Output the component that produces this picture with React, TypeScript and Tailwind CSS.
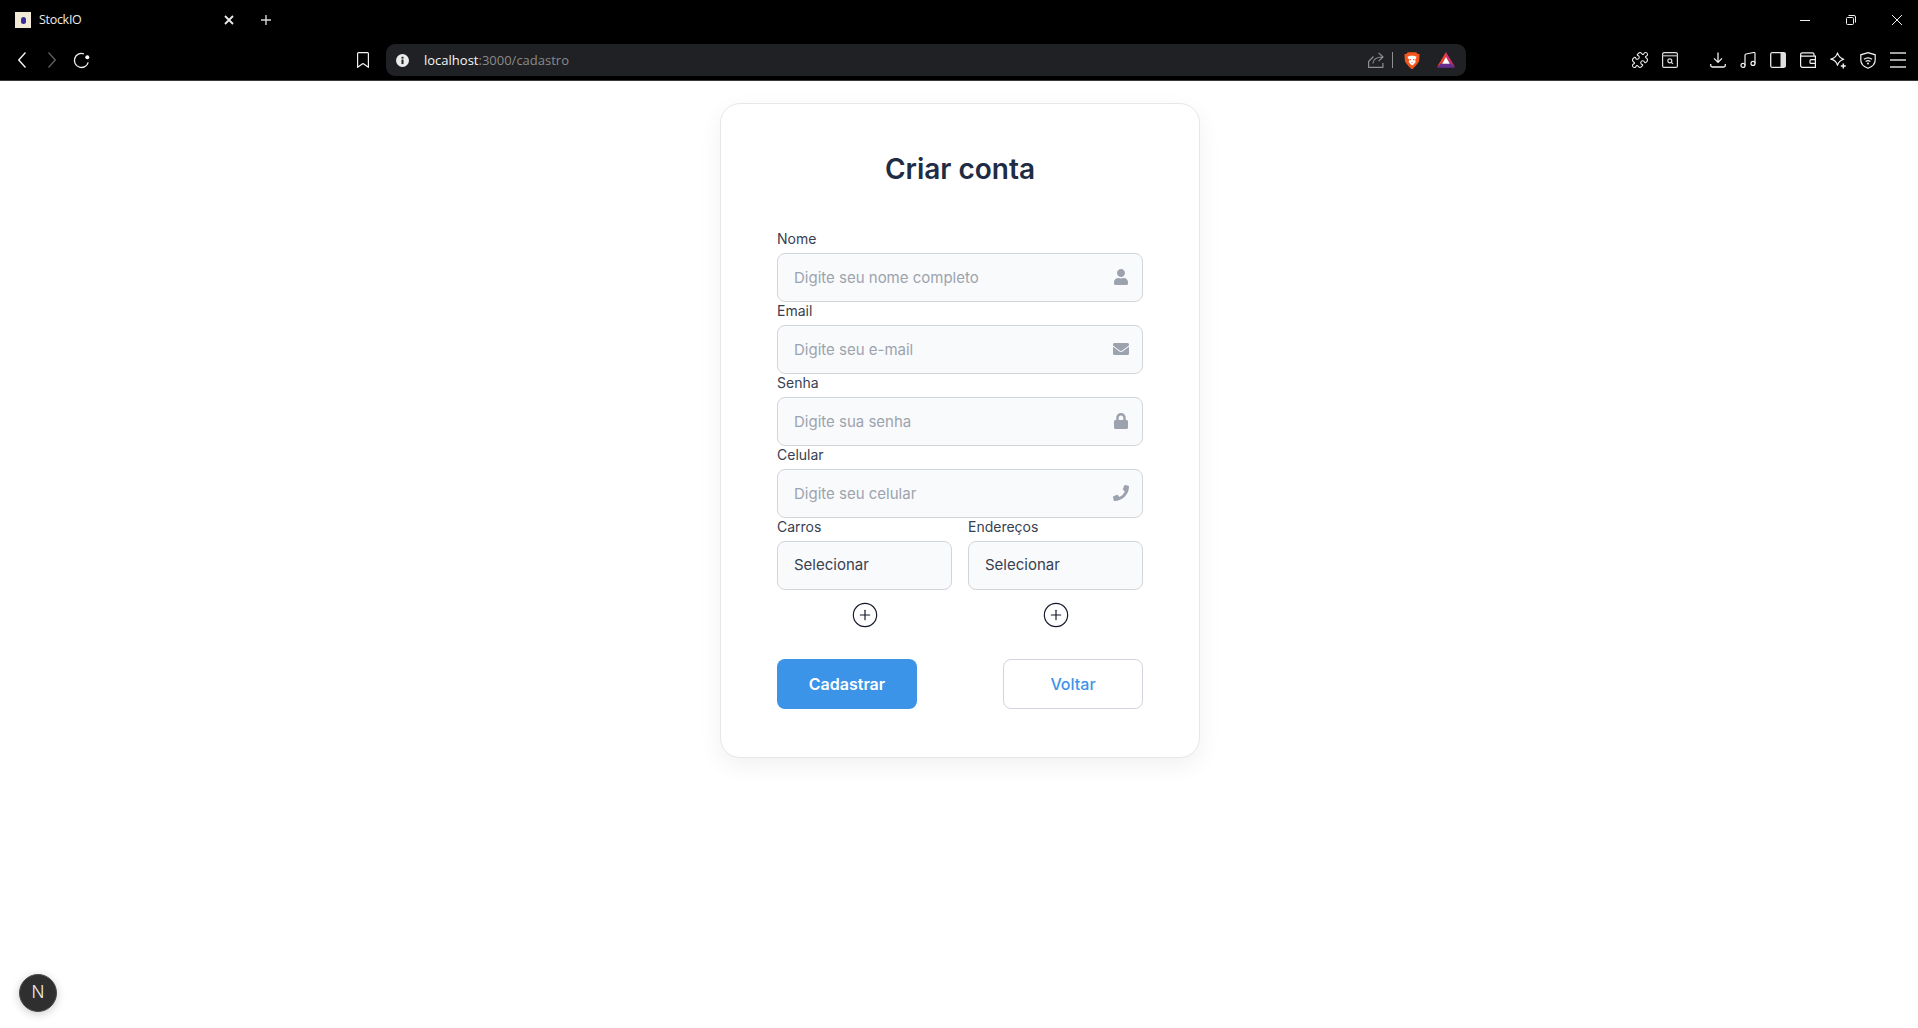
import { CirclePlus, Puzzle } from 'lucide-react';
import { FaUser, FaEnvelope, FaLock, FaPhoneAlt } from 'react-icons/fa';
import type { ReactNode } from 'react';

function BackIcon({ color }: { color: string }) {
  return (
    <svg width="8" height="16" viewBox="0 0 8 16" fill="none" stroke={color} strokeWidth="1.4">
      <path d="M7.500 0.500L0.800 8l6.700 7.500" />
    </svg>
  );
}

function ForwardIcon({ color }: { color: string }) {
  return (
    <svg width="8" height="16" viewBox="0 0 8 16" fill="none" stroke={color} strokeWidth="1.4">
      <path d="M0.500 0.500L7.200 8l-6.700 7.500" />
    </svg>
  );
}

function ReloadIcon() {
  return (
    <svg width="17" height="17" viewBox="0 0 17 17" fill="none" stroke="#f2f2f2" strokeWidth="1.300">
      <path d="M15.200 10.300A7 7 0 1 1 10.800 1.900" />
      <circle cx="14.300" cy="5.300" r="2" fill="#ffffff" stroke="none" />
    </svg>
  );
}

function BookmarkIcon() {
  return (
    <svg width="12" height="16" viewBox="0 0 12 16" fill="none" stroke="#f2f2f2" strokeWidth="1.200" strokeLinejoin="round">
      <path d="M1.500 0.600h9a0.900 0.900 0 0 1 0.900 0.900v13.800L6 11.600 0.600 15.300V1.500a0.900 0.900 0 0 1 0.900-0.900z" />
    </svg>
  );
}

function InfoIcon() {
  return (
    <svg width="13" height="13" viewBox="0 0 13 13">
      <circle cx="6.500" cy="6.500" r="6.500" fill="#ececec" />
      <rect x="5.500" y="5.500" width="2" height="4.600" fill="#202124" />
      <rect x="5.500" y="2.800" width="2" height="1.800" fill="#202124" />
    </svg>
  );
}

function ShareIcon() {
  return (
    <svg width="16" height="16" viewBox="0 0 16 16" fill="none" stroke="#8f8f8f" strokeWidth="1.200" strokeLinejoin="round">
      <path d="M5.500 4.500L0.600 9.500v5.900h14.300V11" />
      <path d="M4.800 11.500c0.400-4 3.300-6.500 10-6.500M10.600 0.900l4.400 4.100-4.400 4.100" />
    </svg>
  );
}

function BraveIcon() {
  return (
    <svg width="16" height="17" viewBox="0 0 16 17">
      <path d="M3.800 0.300h8.400l1.500 1.600 1.800 0.100-0.300 6.300c-0.100 2.400-4.800 7-6.200 8.400-0.300 0.300-1.700 0.300-2 0C5.600 15.300 0.900 10.700 0.800 8.300L0.500 2l1.800-0.100z" fill="#f1561d" />
      <path d="M3.400 4.700l2.900-0.900h3.400l2.900 0.900-1.500 3.500 0.700 1.700-2.300 2.600-1.300 1-1.300-1-2.300-2.600 0.700-1.700z" fill="#fff" />
      <path d="M5.300 6.800l1.700 0.400v1H5.800zM10.700 6.800L9 7.200v1h1.200zM7 10h2l-1 1z" fill="#f1561d" />
    </svg>
  );
}

function RewardsIcon() {
  return (
    <svg width="18" height="16" viewBox="0 0 18 16">
      <path d="M9 0L0 15l4.500-2.800L9 5.500z" fill="#f2402c" />
      <path d="M9 0l9 15-4.500-2.800L9 5.500z" fill="#d0306a" />
      <path d="M0 15.800h18L14.200 11.600H3.800z" fill="#662d91" />
      <path d="M9 5l3.900 6.800H5.100z" fill="#fff" />
    </svg>
  );
}

function SearchPanelIcon() {
  return (
    <svg width="16" height="16" viewBox="0 0 16 16" fill="none" stroke="#dedede" strokeWidth="1.200">
      <rect x="0.600" y="0.600" width="14.800" height="14.800" rx="1.500" />
      <path d="M0.600 3.700h14.800" strokeWidth="1.600" stroke="#9a9a9a" />
      <circle cx="7.800" cy="8.800" r="2" />
      <path d="M9.300 10.300l1.600 1.600" />
    </svg>
  );
}

function DownloadIcon() {
  return (
    <svg width="16" height="16" viewBox="0 0 16 16" fill="none" stroke="#f2f2f2" strokeWidth="1.300" strokeLinejoin="round">
      <path d="M8 0.500v9.500M4 6.400l4 4 4-4" />
      <path d="M0.700 12v1.300c0 1 0.700 1.700 1.600 1.700h11.400c0.900 0 1.600-0.700 1.600-1.700V12" />
    </svg>
  );
}

function MusicIcon() {
  return (
    <svg width="17" height="16" viewBox="0 0 17 16" fill="none" stroke="#f2f2f2" strokeWidth="1.200">
      <circle cx="3" cy="13.400" r="2" />
      <circle cx="13" cy="11.400" r="2" />
      <path d="M5 13.400V3.300c0-0.700 0.400-1.100 1-1.300l8-1.500c0.600-0.100 1 0.200 1 0.800v10.100" />
    </svg>
  );
}

function SidebarIcon() {
  return (
    <svg width="16" height="16" viewBox="0 0 16 16">
      <rect x="0.700" y="0.700" width="14.600" height="14.600" rx="1.500" fill="none" stroke="#e8e8e8" strokeWidth="1.300" />
      <rect x="10.500" y="1" width="5" height="14" fill="#e0e0e0" />
    </svg>
  );
}

function WalletIcon() {
  return (
    <svg width="16" height="16" viewBox="0 0 16 16" fill="none" stroke="#f2f2f2" strokeWidth="1.200">
      <path d="M0.600 3.500v10a1.800 1.800 0 0 0 1.800 1.800h13V4.200H2.300a1.700 1.700 0 0 1-1.700-1.700c0-1 0.800-1.700 1.700-1.700h10.200a1.500 1.500 0 0 1 1.500 1.500v1.900" />
      <rect x="10" y="7.700" width="5.400" height="3.700" rx="1" fill="#000" />
    </svg>
  );
}

function SparkleIcon() {
  return (
    <svg width="17" height="17" viewBox="0 0 17 17" fill="none" stroke="#f2f2f2" strokeWidth="1.200" strokeLinejoin="round">
      <path d="M7.500 0.800c0.900 3.400 2.600 5.300 6.200 6.400-1.700 0.600-3 1.300-3.900 2.200-1 1-1.700 2.200-2.300 3.900-0.900-3.500-2.900-5.300-6.700-6.100 3.800-1 5.800-2.900 6.700-6.400z" />
      <path d="M13.300 11.500v5M10.800 14h5" strokeWidth="1.500" />
    </svg>
  );
}

function VpnIcon() {
  return (
    <svg width="16" height="17" viewBox="0 0 16 17" fill="none" stroke="#f2f2f2" strokeWidth="1.200">
      <path d="M8 0.700l7.200 2.100v5.200c0 4-3.300 6.900-7.200 8.300-3.900-1.400-7.200-4.300-7.200-8.300V2.800z" />
      <path d="M4 7.300c2.400-1.800 5.600-1.800 8 0M5.600 9.400c1.500-1 3.300-1 4.800 0" />
      <circle cx="8" cy="11.600" r="1" fill="#f2f2f2" stroke="none" />
    </svg>
  );
}

function MenuIcon() {
  return (
    <svg width="16" height="16" viewBox="0 0 16 16" fill="#a3a3a3">
      <rect x="0" y="0" width="16" height="2" />
      <rect x="0" y="7" width="16" height="2" />
      <rect x="0" y="14" width="16" height="2" />
    </svg>
  );
}

function RestoreIcon() {
  return (
    <svg width="10" height="10" viewBox="0 0 10 10" fill="none" stroke="#f0f0f0" strokeWidth="1">
      <rect x="0.500" y="2.500" width="7" height="7" rx="1" />
      <path d="M2.500 0.500h5.500a1.500 1.500 0 0 1 1.500 1.500v5.500" />
    </svg>
  );
}

function Favicon() {
  return (
    <div className="w-[16px] h-[16px] bg-[#f1ead6] flex items-center justify-center">
      <div className="w-[5px] h-[7px] rounded-full bg-[#3a2d9a]" />
    </div>
  );
}

function BrowserChrome() {
  return (
    <header className="h-[81px] bg-black border-b border-[#3a3a3a] font-['Open_Sans',sans-serif]">
      <div className="h-[40px] flex items-center pl-[15px] pr-[16px]">
        <div className="flex items-center w-[219px]">
          <Favicon />
          <span className="ml-[8px] flex-1 text-[12.5px] tracking-[-0.3px] text-[#ececec]">StockIO</span>
          <svg width="10" height="10" viewBox="0 0 10 10" stroke="#ececec" strokeWidth="1.800">
            <path d="M1 1l8 8M9 1l-8 8" />
          </svg>
        </div>
        <svg className="ml-[27px]" width="10" height="10" viewBox="0 0 10 10" stroke="#d8d8d8" strokeWidth="1.400">
          <path d="M5 0v10M0 5h10" />
        </svg>
        <div className="ml-auto flex items-center">
          <div className="w-[10px] h-px bg-[#f0f0f0]" />
          <div className="ml-[36px]"><RestoreIcon /></div>
          <svg className="ml-[36px]" width="10" height="10" viewBox="0 0 10 10" stroke="#f0f0f0" strokeWidth="1">
            <path d="M0 0l10 10M10 0L0 10" />
          </svg>
        </div>
      </div>
      <div className="h-[40px] flex items-center pl-[18px]">
        <BackIcon color="#f2f2f2" />
        <div className="ml-[22px]"><ForwardIcon color="#5c5c5c" /></div>
        <div className="ml-[17px]"><ReloadIcon /></div>
        <div className="ml-[267px]"><BookmarkIcon /></div>
        <div className="ml-[17px] w-[1080px] h-[32px] rounded-[9px] bg-[#202124] flex items-center pl-[10px] pr-[11px]">
          <InfoIcon />
          <span className="ml-[15px] text-[13px] leading-[20px] text-[#f5f5f5]">
            localhost<span className="text-[#8a8a8a]">:3000/cadastro</span>
          </span>
          <div className="ml-auto flex items-center">
            <ShareIcon />
            <div className="w-px h-[16px] bg-[#8f8f8f] ml-[8px]" />
            <div className="ml-[11px]"><BraveIcon /></div>
            <div className="ml-[17px]"><RewardsIcon /></div>
          </div>
        </div>
        <Puzzle className="ml-[165px]" size={18} strokeWidth={1.4} color="#f2f2f2" />
        <div className="ml-[13px]"><SearchPanelIcon /></div>
        <div className="ml-[32px]"><DownloadIcon /></div>
        <div className="ml-[14px]"><MusicIcon /></div>
        <div className="ml-[13px]"><SidebarIcon /></div>
        <div className="ml-[14px]"><WalletIcon /></div>
        <div className="ml-[14px]"><SparkleIcon /></div>
        <div className="ml-[13px]"><VpnIcon /></div>
        <div className="ml-[14px]"><MenuIcon /></div>
      </div>
    </header>
  );
}

function Field({ label, placeholder, icon }: { label: string; placeholder: string; icon: ReactNode }) {
  return (
    <div>
      <label className="block text-[14px] leading-[18px] mb-[5px] text-[#374151]">{label}</label>
      <div className="relative">
        <input
          placeholder={placeholder}
          className="w-full h-[49px] pl-[16px] pr-[44px] text-[15px] rounded-[8px] border border-[#d1d5db] bg-[#f9fafb] placeholder:text-[#9ca3af] outline-none"
        />
        <span className="absolute right-[14px] top-[16px] text-[#9ca3af]">{icon}</span>
      </div>
    </div>
  );
}

function SelectField({ label }: { label: string }) {
  return (
    <div>
      <label className="block text-[14px] leading-[18px] mb-[5px] text-[#374151]">{label}</label>
      <select className="w-full h-[49px] pl-[16px] text-[15px] text-[#374151] appearance-none rounded-[8px] border border-[#d1d5db] bg-[#f9fafb] outline-none">
        <option>Selecionar</option>
      </select>
      <div className="flex justify-center mt-[11px]">
        <CirclePlus size={28} strokeWidth={1} color="#111827" />
      </div>
    </div>
  );
}

export default function App() {
  return (
    <div className="min-h-screen bg-white font-['Inter',sans-serif] relative">
      <BrowserChrome />
      <main className="pl-[2px] flex justify-center pt-[22px]">
        <div className="w-[480px] rounded-[20px] border border-[#e5e7eb] bg-white shadow-[0_8px_24px_rgba(0,0,0,0.06)] px-[56px] pt-[45px] pb-[48px]">
          <h1 className="text-center text-[28px] leading-[40px] font-semibold text-[#1e2d45] mb-[41px]">Criar conta</h1>
          <div className="flex flex-col">
            <Field label="Nome" placeholder="Digite seu nome completo" icon={<FaUser size={16} />} />
            <Field label="Email" placeholder="Digite seu e-mail" icon={<FaEnvelope size={16} />} />
            <Field label="Senha" placeholder="Digite sua senha" icon={<FaLock size={16} />} />
            <Field label="Celular" placeholder="Digite seu celular" icon={<FaPhoneAlt size={16} className="-scale-x-100" />} />
            <div className="grid grid-cols-2 gap-[16px]">
              <SelectField label="Carros" />
              <SelectField label="Endereços" />
            </div>
          </div>
          <div className="flex justify-between mt-[30px]">
            <button className="w-[140px] h-[50px] rounded-[8px] bg-[#3b94e8] text-white font-semibold text-[16px]">Cadastrar</button>
            <button className="w-[140px] h-[50px] rounded-[8px] border border-[#d1d5db] bg-white text-[#3b94e8] font-medium text-[16px]">Voltar</button>
          </div>
        </div>
      </main>
      <div className="absolute left-[19px] top-[974px] w-[38px] h-[38px] rounded-full bg-[#2f2f2f] border border-[#4a4a4a] shadow-[0_2px_10px_rgba(0,0,0,0.2)] flex items-center justify-center text-[#eeeeee] text-[17px] font-light">
        N
      </div>
    </div>
  );
}
